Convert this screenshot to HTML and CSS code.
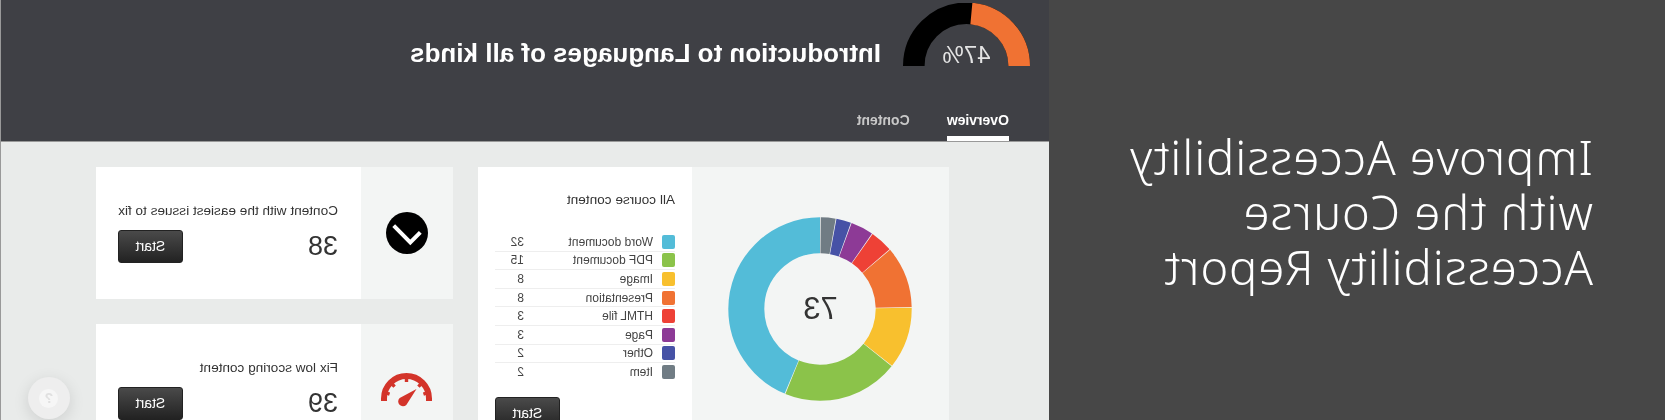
FILE: index.html
```html
<!DOCTYPE html>
<html lang="en">
<head>
    <meta charset="UTF-8">
    <title>Course Accessibility Report</title>
    <link rel="stylesheet" href="styles.css">
</head>
<body>
    <div class="page">
        <div class="intro">
            <h2>Improve Accessibility<br>with the Course<br>Accessibility Report</h2>
        </div>

        <div class="app">
            <div class="course-header">
                <div class="course-top">
                    <div class="gauge">
                        <svg width="127" height="63" viewBox="0 0 127 63">
                            <path d="M10.8 63A52.7 52.7 0 0 1 116.2 63" fill="none" stroke="#000" stroke-width="21.6"/>
                            <path d="M10.8 63A52.7 52.7 0 0 1 116.2 63" fill="none" stroke="#f07233" stroke-width="21.6" pathLength="100" stroke-dasharray="47 53"/>
                        </svg>
                        <span class="gauge-value">47%</span>
                    </div>
                    <h1>Introduction to Languages of all kinds</h1>
                </div>
                <div class="tabs">
                    <div class="tab active">Overview</div>
                    <div class="tab">Content</div>
                </div>
            </div>

            <div class="dashboard">
                <div class="card content-card">
                    <div class="chart-side">
                        <svg class="donut" width="184" height="184" viewBox="0 0 184 184">
                            <g fill="none" stroke-width="36" transform="rotate(-90 92 92)">
                                <circle cx="92" cy="92" r="73.7" pathLength="73" stroke="#53bcd8" stroke-dasharray="31.9 41.1" stroke-dashoffset="0"/>
                                <circle cx="92" cy="92" r="73.7" pathLength="73" stroke="#8bc34a" stroke-dasharray="14.9 58.1" stroke-dashoffset="-32"/>
                                <circle cx="92" cy="92" r="73.7" pathLength="73" stroke="#f8c02e" stroke-dasharray="7.9 65.1" stroke-dashoffset="-47"/>
                                <circle cx="92" cy="92" r="73.7" pathLength="73" stroke="#f07233" stroke-dasharray="7.9 65.1" stroke-dashoffset="-55"/>
                                <circle cx="92" cy="92" r="73.7" pathLength="73" stroke="#ee4136" stroke-dasharray="2.9 70.1" stroke-dashoffset="-63"/>
                                <circle cx="92" cy="92" r="73.7" pathLength="73" stroke="#8d3a96" stroke-dasharray="2.9 70.1" stroke-dashoffset="-66"/>
                                <circle cx="92" cy="92" r="73.7" pathLength="73" stroke="#4652a6" stroke-dasharray="1.9 71.1" stroke-dashoffset="-69"/>
                                <circle cx="92" cy="92" r="73.7" pathLength="73" stroke="#707c84" stroke-dasharray="1.9 71.1" stroke-dashoffset="-71"/>
                            </g>
                        </svg>
                        <span class="donut-total">73</span>
                    </div>
                    <div class="legend-side">
                        <div class="card-title">All course content</div>
                        <ul class="legend">
                            <li><span class="swatch word"></span><span class="label">Word document</span><span class="count">32</span></li>
                            <li><span class="swatch pdf"></span><span class="label">PDF document</span><span class="count">15</span></li>
                            <li><span class="swatch image"></span><span class="label">Image</span><span class="count">8</span></li>
                            <li><span class="swatch slides"></span><span class="label">Presentation</span><span class="count">8</span></li>
                            <li><span class="swatch html"></span><span class="label">HTML file</span><span class="count">3</span></li>
                            <li><span class="swatch page-type"></span><span class="label">Page</span><span class="count">3</span></li>
                            <li><span class="swatch other"></span><span class="label">Other</span><span class="count">2</span></li>
                            <li><span class="swatch item"></span><span class="label">Item</span><span class="count">2</span></li>
                        </ul>
                        <button class="start-button">Start</button>
                    </div>
                </div>

                <div class="task-column">
                    <div class="card task-card">
                        <div class="task-icon">
                            <svg width="42" height="42" viewBox="0 0 42 42">
                                <circle cx="21" cy="21" r="21" fill="#000"/>
                                <path d="M34.3 13.7L17.7 30.3L7.7 20.3" fill="none" stroke="#fff" stroke-width="4"/>
                            </svg>
                        </div>
                        <div class="task-body">
                            <div class="card-title">Content with the easiest issues to fix</div>
                            <div class="task-row">
                                <span class="task-count">38</span>
                                <button class="start-button">Start</button>
                            </div>
                        </div>
                    </div>

                    <div class="card task-card">
                        <div class="task-icon">
                            <svg width="51" height="34" viewBox="0 0 51 34">
                                <g fill="none" stroke="#d3342a">
                                    <path d="M3 28V25.5A22.5 22.5 0 0 1 48 25.5V28" stroke-width="6"/>
                                    <path d="M25.5 5V9M11 11L13.6 13.6M40 11L37.4 13.6M5 20L8.6 21.2M46 20L42.4 21.2" stroke-width="3.4"/>
                                </g>
                                <path d="M15.5 16L25.7 32A4.8 4.8 0 0 0 32.3 25Z" fill="#d3342a"/>
                            </svg>
                        </div>
                        <div class="task-body">
                            <div class="card-title">Fix low scoring content</div>
                            <div class="task-row">
                                <span class="task-count">39</span>
                                <button class="start-button">Start</button>
                            </div>
                        </div>
                    </div>
                </div>
            </div>

            <div class="help-button"><span>?</span></div>
        </div>
    </div>
</body>
</html>
```

FILE: styles.css
```css
* {
    margin: 0;
    padding: 0;
    box-sizing: border-box;
}

html, body {
    height: 100%;
    overflow: hidden;
}

body {
    font-family: "Liberation Sans", Arial, sans-serif;
    background: #474747;
}

/* the whole screenshot is mirrored */
.page {
    display: flex;
    width: 1665px;
    height: 420px;
    overflow: hidden;
    transform: scaleX(-1);
}

.intro {
    width: 616px;
    flex-shrink: 0;
    padding-left: 72px;
    display: flex;
    flex-direction: column;
    justify-content: center;
    background: #474747;
}

.intro h2 {
    font-family: "Noto Sans", sans-serif;
    font-weight: 300;
    font-size: 47px;
    letter-spacing: 1px;
    line-height: 55px;
    color: #fff;
    margin-bottom: -4px;
}

.app {
    position: relative;
    flex: 1;
    display: flex;
    flex-direction: column;
    background: #e9ebea;
    border-right: 1px solid #999;
    overflow: hidden;
    filter: blur(0.4px);
}

.course-header {
    height: 142px;
    flex-shrink: 0;
    padding-top: 3px;
    display: flex;
    flex-direction: column;
    justify-content: space-between;
    background: #3f4045;
    border-bottom: 1px solid #999;
}

.course-top {
    display: flex;
    align-items: flex-start;
    padding-left: 19px;
    gap: 22px;
}

.gauge {
    position: relative;
    height: 63px;
    line-height: 0;
}

.gauge-value {
    position: absolute;
    left: 0;
    right: 0;
    bottom: -1px;
    text-align: center;
    font-size: 24px;
    line-height: 24px;
    color: #e4e4e4;
}

.course-top h1 {
    font-size: 26px;
    font-weight: bold;
    color: #fff;
    margin-top: 35px;
}

.tabs {
    display: flex;
    padding-left: 40px;
    gap: 37px;
}

.tab {
    font-size: 14px;
    font-weight: bold;
    line-height: 15px;
    padding-bottom: 8px;
    border-bottom: 5px solid transparent;
    color: #c8c8c8;
}

.tab.active {
    color: #fff;
    border-bottom-color: #fff;
}

.dashboard {
    display: flex;
    align-items: flex-start;
    padding: 25px 0 0 100px;
    gap: 25px;
}

.card {
    display: flex;
    background: #fff;
}

.content-card {
    width: 471px;
    height: 300px;
}

.chart-side {
    position: relative;
    width: 257px;
    padding: 50px 0 0 36.5px;
    background: #f3f5f4;
}

.donut-total {
    position: absolute;
    left: 36.5px;
    top: 50px;
    width: 184px;
    height: 184px;
    display: flex;
    align-items: center;
    justify-content: center;
    font-size: 31px;
    color: #333;
}

.legend-side {
    flex: 1;
    padding: 25px 17px 0 17px;
}

.card-title {
    font-size: 13.6px;
    line-height: 16px;
    color: #333;
}

.legend {
    list-style: none;
    margin: 25px 0 15px;
}

.legend li {
    display: flex;
    align-items: center;
    height: 18.6px;
    font-size: 12px;
    color: #444;
    border-bottom: 1px solid #eee;
}

.legend li:last-child {
    border-bottom: none;
}

.swatch {
    width: 13px;
    height: 14px;
    border-radius: 2px;
    margin-right: 9px;
}

.swatch.word { background: #53bcd8; }
.swatch.pdf { background: #8bc34a; }
.swatch.image { background: #f8c02e; }
.swatch.slides { background: #f07233; }
.swatch.html { background: #ee4136; }
.swatch.page-type { background: #8d3a96; }
.swatch.other { background: #4652a6; }
.swatch.item { background: #707c84; }

.count {
    margin-left: auto;
    width: 29px;
}

.start-button {
    display: block;
    width: 65px;
    height: 33px;
    border: 1px solid #222;
    border-radius: 3px;
    background: linear-gradient(#4a4a4a, #222);
    color: #fff;
    font-family: inherit;
    font-size: 14px;
}

.legend-side .start-button {
    margin-left: auto;
}

.task-column {
    display: flex;
    flex-direction: column;
    gap: 25px;
}

.task-card {
    width: 357px;
    height: 132px;
}

.task-icon {
    width: 92px;
    display: flex;
    align-items: center;
    justify-content: center;
    background: #f3f5f4;
}

.task-body {
    flex: 1;
    padding: 0 22px 1px 23px;
    display: flex;
    flex-direction: column;
    justify-content: center;
    gap: 11px;
}

.task-row {
    display: flex;
    align-items: center;
    justify-content: space-between;
}

.task-count {
    font-size: 27px;
    color: #333;
}

.help-button {
    position: absolute;
    left: 979px;
    bottom: 1px;
    width: 42px;
    height: 42px;
    border-radius: 50%;
    display: flex;
    align-items: center;
    justify-content: center;
    background: #eee;
    box-shadow: 0 4px 16px rgba(0, 0, 0, 0.12);
}

.help-button span {
    width: 19px;
    height: 19px;
    border-radius: 50%;
    background: #f6f6f6;
    color: #e0e0e0;
    font-size: 14px;
    font-weight: bold;
    line-height: 19px;
    text-align: center;
}
```
